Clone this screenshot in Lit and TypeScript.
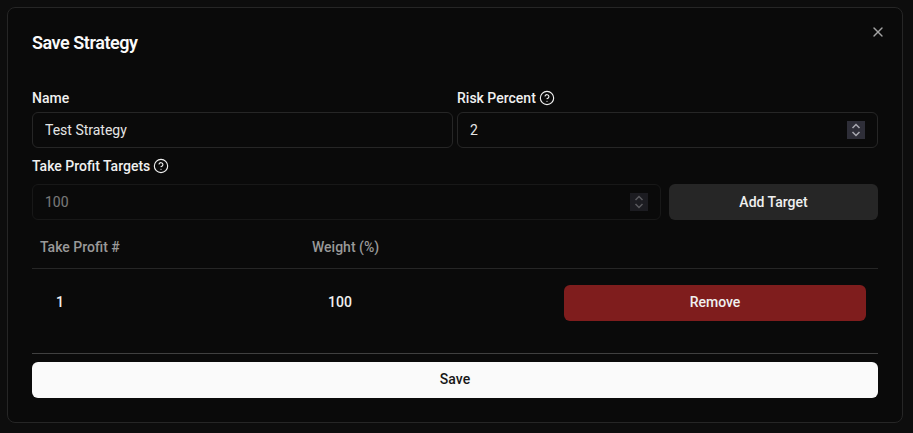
import { LitElement, html, css, svg } from "lit";
import { customElement } from "lit/decorators.js";

const help = html`<svg class="help" viewBox="0 0 24 24" fill="none" stroke="currentColor" stroke-width="2" stroke-linecap="round" stroke-linejoin="round">
  <circle cx="12" cy="12" r="10"></circle>
  ${svg`<path d="M9.09 9a3 3 0 0 1 5.83 1c0 2-3 3-3 3"></path><path d="M12 17h.01"></path>`}
</svg>`;

const spin = html`<span class="spin" aria-hidden="true">
  <svg viewBox="0 0 18 18" fill="none" stroke="currentColor" stroke-width="1.5">
    <path d="M5.5 7 9 3.5 12.5 7"></path><path d="M5.5 11 9 14.5 12.5 11"></path>
  </svg>
</span>`;

@customElement("app-root")
export class AppRoot extends LitElement {
  static styles = css`
    :host {
      display: block;
      width: 913px;
      height: 433px;
      box-sizing: border-box;
      padding: 7px 10px 10px 7px;
      background: #0d0d0d;
      font-family: Roboto, "Liberation Sans", sans-serif;
      color: #fafafa;
      overflow: hidden;
    }
    * { box-sizing: border-box; }
    .modal {
      position: relative;
      width: 896px;
      height: 416px;
      padding: 24px;
      background: #0a0a0a;
      border: 1px solid #262626;
      border-radius: 8px;
      display: flex;
      flex-direction: column;
      transform: translateZ(0);
    }
    .close {
      position: absolute;
      top: 16px;
      right: 16px;
      width: 16px;
      height: 16px;
      padding: 0;
      border: 0;
      background: none;
      color: #a3a3a3;
      display: block;
    }
    .close svg { display: block; width: 16px; height: 16px; }
    h2 {
      margin: 0 0 35px;
      font-size: 18px;
      font-weight: 600;
      line-height: 21px;
      letter-spacing: -0.45px;
    }
    .two {
      display: grid;
      grid-template-columns: 1fr 1fr;
      column-gap: 4px;
    }
    label, .label {
      display: flex;
      align-items: center;
      gap: 3px;
      font-size: 14px;
      font-weight: 500;
      line-height: 20px;
      color: #f0f0f0;
    }
    .field label { margin-bottom: 4px; }
    .help { width: 16px; height: 16px; display: block; stroke-width: 1.7; }
    .box { position: relative; display: block; }
    input {
      display: block;
      width: 100%;
      height: 36px;
      padding: 4px 12px;
      background: transparent;
      border: 1px solid #262626;
      border-radius: 6px;
      color: #e5e5e5;
      font-family: inherit;
      font-size: 14px;
      outline: none;
      appearance: textfield;
    }
    input::-webkit-inner-spin-button { appearance: none; display: none; }
    .spin {
      position: absolute;
      top: 9px;
      right: 13px;
      width: 18px;
      height: 18px;
      background: #2e2e38;
      color: #a8a8b0;
      display: block;
    }
    .spin svg { display: block; width: 18px; height: 18px; }
    .targets { margin-top: 8px; }
    .add {
      display: flex;
      gap: 8px;
      margin-top: 8px;
    }
    .add .box { flex: 1; opacity: 0.5; }
    .add button { width: 209px; flex: none; }
    button.btn {
      height: 36px;
      border: 0;
      border-radius: 6px;
      font-family: inherit;
      font-size: 14px;
      font-weight: 500;
      color: #f0f0f0;
      padding: 0;
    }
    .secondary { background: #262626; }
    .danger { background: #7f1d1d; width: 100%; display: block; padding-bottom: 2px !important; }
    .primary { background: #fafafa; color: #171717 !important; width: 100%; display: block; padding-bottom: 2px !important; }
    table {
      width: 100%;
      margin-top: 8px;
      border-collapse: collapse;
      table-layout: fixed;
      font-size: 14px;
    }
    th {
      height: 40px;
      padding: 0 8px 2px;
      text-align: left;
      font-weight: 500;
      color: #999999;
      border-bottom: 1px solid #262626;
    }
    td { padding: 16px 12px; font-weight: 500; color: #f0f0f0; }
    td.num { padding-left: 24px; padding-bottom: 18px; }
    hr {
      margin: 16px 0 8px;
      border: 0;
      border-top: 1px solid #404040;
      width: 100%;
    }
  `;

  render() {
    return html`
      <div class="modal">
        <button class="close" aria-label="Close">
          <svg viewBox="0 0 24 24" fill="none" stroke="currentColor" stroke-width="2" stroke-linecap="round" stroke-linejoin="round">
            <path d="M18 6 6 18"></path><path d="m6 6 12 12"></path>
          </svg>
        </button>
        <h2>Save Strategy</h2>
        <div class="two">
          <div class="field">
            <label>Name</label>
            <input type="text" .value=${"Test Strategy"} />
          </div>
          <div class="field">
            <label>Risk Percent ${help}</label>
            <span class="box"><input type="number" .value=${"2"} />${spin}</span>
          </div>
        </div>
        <div class="targets">
          <div class="label">Take Profit Targets ${help}</div>
          <div class="add">
            <span class="box"><input type="number" disabled .value=${"100"} />${spin}</span>
            <button class="btn secondary">Add Target</button>
          </div>
        </div>
        <table>
          <colgroup><col style="width:272px" /><col style="width:248px" /><col /></colgroup>
          <thead><tr><th>Take Profit #</th><th>Weight (%)</th><th></th></tr></thead>
          <tbody>
            <tr>
              <td class="num">1</td>
              <td class="num">100</td>
              <td><button class="btn danger">Remove</button></td>
            </tr>
          </tbody>
        </table>
        <hr />
        <button class="btn primary">Save</button>
      </div>
    `;
  }
}
